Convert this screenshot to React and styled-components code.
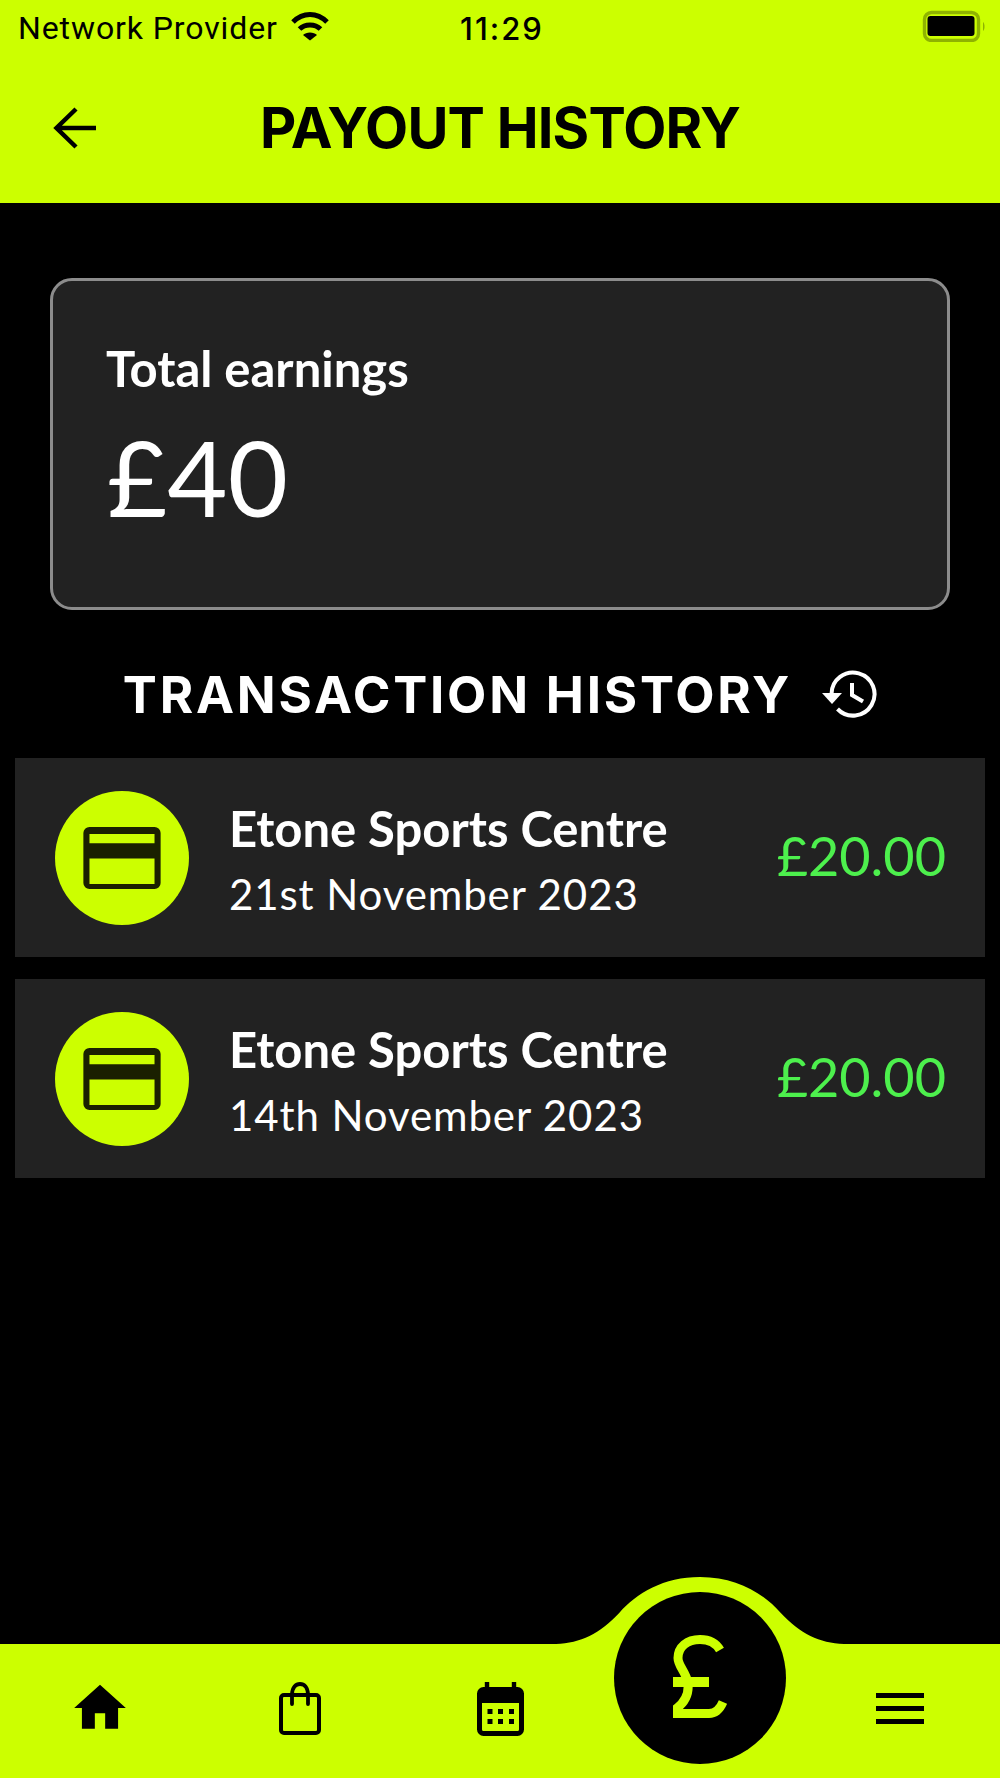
import React from "react";
import styled, { createGlobalStyle } from "styled-components";
import { MdHome } from "react-icons/md";

const LIME = "#ccff00";
const PANEL = "#222222";

const GlobalStyle = createGlobalStyle`
  html, body {
    margin: 0;
    padding: 0;
    background: #000;
  }
  * {
    box-sizing: border-box;
  }
`;

const transactions = [
  { id: 1, place: "Etone Sports Centre", date: "21st November 2023", amount: "£20.00" },
  { id: 2, place: "Etone Sports Centre", date: "14th November 2023", amount: "£20.00" },
];

function WifiIcon() {
  return (
    <svg width="40" height="30" viewBox="0 0 40 30">
      <path d="M3 11 C13 1 27 1 37 11" fill="none" stroke="#000" strokeWidth="5" />
      <path d="M9.5 18 C15 12.5 25 12.5 30.5 18" fill="none" stroke="#000" strokeWidth="5" />
      <path d="M13 24 C16 20.5 24 20.5 27 24 L20 29.5 Z" fill="#000" />
    </svg>
  );
}

function BatteryIcon() {
  return (
    <svg width="64" height="32" viewBox="0 0 64 32">
      <rect x="2.5" y="2.5" width="54" height="28" rx="7" fill="none" stroke="#8fb300" strokeWidth="3.4" />
      <rect x="5.5" y="6" width="47" height="20" rx="3" fill="#000" />
      <path d="M61 12 C63 13 63 20 61 21 Z" fill="#8fb300" />
    </svg>
  );
}

function BackArrow() {
  return (
    <svg width="44" height="42" viewBox="0 0 44 42">
      <path d="M23 2 L3.5 21 L23 40 M4 21 H43" fill="none" stroke="#000" strokeWidth="4.5" />
    </svg>
  );
}

function HistoryIcon() {
  return (
    <svg width="55" height="48" viewBox="0 0 55 48">
      <path d="M9.5 24 A21.5 21.5 0 1 1 15.5 39" fill="none" stroke="#fff" strokeWidth="4" />
      <path d="M0 23 H20 L10 34 Z" fill="#fff" />
      <path d="M30 13 V25 L41 31.5" fill="none" stroke="#fff" strokeWidth="4" />
    </svg>
  );
}

function CardIcon() {
  return (
    <svg width="78" height="62" viewBox="0 0 76 61">
      <path
        fillRule="evenodd"
        d="M6 0 H70 A6 6 0 0 1 76 6 V55 A6 6 0 0 1 70 61 H6 A6 6 0 0 1 0 55 V6 A6 6 0 0 1 6 0 Z M6 7 V16 H70 V7 Z M6 31 V56 H70 V31 Z"
        fill="#1a2000"
      />
    </svg>
  );
}

function BagIcon() {
  return (
    <svg width="42" height="54" viewBox="0 0 42 54">
      <rect x="2" y="13" width="38" height="38" rx="3" fill="none" stroke="#000" strokeWidth="4" />
      <path d="M13 22 V13 C13 5 17 2 21 2 C25 2 29 5 29 13 V22" fill="none" stroke="#000" strokeWidth="3.8" strokeLinecap="round" />
    </svg>
  );
}

function CalendarIcon() {
  const dots = [];
  [27, 37].forEach((y) => {
    [10.5, 21, 32].forEach((x) => {
      dots.push(<rect key={`${x}-${y}`} x={x} y={y} width="5" height="5" fill="#000" />);
    });
  });
  return (
    <svg width="47" height="54" viewBox="0 0 47 54">
      <path d="M10 0 V8 M37 0 V8" stroke="#000" strokeWidth="4.4" />
      <rect x="2.5" y="7.5" width="42" height="44" rx="4" fill="none" stroke="#000" strokeWidth="5" />
      <rect x="2" y="7" width="43" height="14" rx="3" fill="#000" />
      {dots}
    </svg>
  );
}

function PoundIcon() {
  return (
    <svg width="54" height="83" viewBox="0 0 54 83">
      <path
        d="M47 15 C43 8 36 4.5 27 4.5 C14 4.5 5 12 5 23 C5 31 13 37 15 48 C16 58 12 67 4 73 V78.5 H36 C42 78.5 47 74 50 67"
        fill="none"
        stroke={LIME}
        strokeWidth="9"
      />
      <rect x="0" y="42" width="36" height="10" fill={LIME} />
    </svg>
  );
}

export default function App() {
  return (
    <Page>
      <GlobalStyle />
      <TopArea>
        <StatusBar>
          <Carrier>
            Network Provider
            <WifiSlot>
              <WifiIcon />
            </WifiSlot>
          </Carrier>
          <Clock>11:29</Clock>
          <BatterySlot>
            <BatteryIcon />
          </BatterySlot>
        </StatusBar>
        <TitleBar>
          <BackButton>
            <BackArrow />
          </BackButton>
          <PageTitle>PAYOUT HISTORY</PageTitle>
        </TitleBar>
      </TopArea>

      <Main>
        <EarningsCard>
          <EarningsLabel>Total earnings</EarningsLabel>
          <EarningsValue>£40</EarningsValue>
        </EarningsCard>

        <SectionHeading>
          <SectionTitle>TRANSACTION HISTORY</SectionTitle>
          <HistoryIcon />
        </SectionHeading>

        <TransactionList>
          {transactions.map((t) => (
            <TransactionRow key={t.id}>
              <CardBadge>
                <CardIcon />
              </CardBadge>
              <TransactionText>
                <Place>{t.place}</Place>
                <TxDate>{t.date}</TxDate>
              </TransactionText>
              <Amount>{t.amount}</Amount>
            </TransactionRow>
          ))}
        </TransactionList>
      </Main>

      <BottomNav>
        <Bump viewBox="0 0 278 68" preserveAspectRatio="none">
          <path
            d="M0 67 C24 66 42 57 61 36 C78 16 104 0 139 0 C174 0 200 16 217 36 C236 57 254 66 278 67 V68 H0 Z"
            fill={LIME}
          />
        </Bump>
        <NavItem>
          <HomeIcon size={62} color="#000" />
        </NavItem>
        <NavItem>
          <BagIcon />
        </NavItem>
        <NavItem>
          <CalendarIcon />
        </NavItem>
        <NavItem>
          <PayoutButton>
            <PoundIcon />
          </PayoutButton>
        </NavItem>
        <NavItem>
          <Hamburger>
            <span />
            <span />
            <span />
          </Hamburger>
        </NavItem>
      </BottomNav>
    </Page>
  );
}

const Page = styled.div`
  width: 1000px;
  height: 1778px;
  display: flex;
  flex-direction: column;
  background: #000;
  overflow: hidden;
`;

const TopArea = styled.header`
  height: 203px;
  flex-shrink: 0;
  background: ${LIME};
  color: #000;
`;

const StatusBar = styled.div`
  height: 56px;
  padding: 0 14px 0 18px;
  display: grid;
  grid-template-columns: 1fr auto 1fr;
  align-items: center;
`;

const Carrier = styled.div`
  display: flex;
  align-items: center;
  gap: 12px;
  font-family: "Roboto", "Liberation Sans", sans-serif;
  font-size: 32px;
  letter-spacing: 0.9px;
`;

const WifiSlot = styled.span`
  display: flex;
  margin-top: -4px;
`;

const Clock = styled.div`
  font-family: "Inter", "Liberation Sans", sans-serif;
  font-size: 31px;
  font-weight: 500;
  letter-spacing: 2px;
`;

const BatterySlot = styled.div`
  display: flex;
  justify-content: flex-end;
  margin-top: -4px;
`;

const TitleBar = styled.div`
  position: relative;
  height: 147px;
  padding-bottom: 3px;
  display: flex;
  align-items: center;
  justify-content: center;
`;

const BackButton = styled.div`
  position: absolute;
  left: 53px;
  top: 51px;
  display: flex;
`;

const PageTitle = styled.h1`
  margin: 0;
  font-family: "Inter", "Liberation Sans", sans-serif;
  font-size: 56px;
  font-weight: 700;
  letter-spacing: -0.8px;
`;

const Main = styled.main`
  flex: 1;
  min-height: 0;
  padding: 75px 15px 0;
  display: flex;
  flex-direction: column;
`;

const EarningsCard = styled.section`
  margin: 0 35px;
  height: 332px;
  padding: 58px 53px;
  background: ${PANEL};
  border: 3px solid #8c8c8c;
  border-radius: 22px;
  color: #fff;
  font-family: "Lato", "Liberation Sans", sans-serif;
`;

const EarningsLabel = styled.div`
  font-size: 49px;
  font-weight: 700;
  line-height: 58px;
`;

const EarningsValue = styled.div`
  margin-top: 25px;
  padding-left: 1px;
  font-size: 104px;
  font-weight: 400;
  line-height: 110px;
`;

const SectionHeading = styled.div`
  height: 148px;
  padding-top: 20px;
  display: flex;
  align-items: center;
  justify-content: center;
  gap: 30px;
  color: #fff;
`;

const SectionTitle = styled.h2`
  margin: 0;
  font-family: "Inter", "Liberation Sans", sans-serif;
  font-size: 51px;
  font-weight: 700;
  letter-spacing: 2.8px;
`;

const TransactionList = styled.div`
  display: flex;
  flex-direction: column;
  gap: 22px;
`;

const TransactionRow = styled.div`
  height: 199px;
  padding: 0 39px 0 40px;
  display: flex;
  align-items: center;
  background: ${PANEL};
`;

const CardBadge = styled.div`
  width: 134px;
  height: 134px;
  flex-shrink: 0;
  border-radius: 50%;
  background: ${LIME};
  display: flex;
  align-items: center;
  justify-content: center;
`;

const TransactionText = styled.div`
  flex: 1;
  margin-left: 40px;
  padding-top: 6px;
  font-family: "Lato", "Liberation Sans", sans-serif;
  color: #fff;
`;

const Place = styled.div`
  font-size: 49px;
  font-weight: 700;
  line-height: 56px;
`;

const TxDate = styled.div`
  margin-top: 10px;
  font-size: 42px;
  font-weight: 400;
  line-height: 56px;
  letter-spacing: 0.9px;
`;

const Amount = styled.div`
  margin-bottom: 4px;
  font-family: "Lato", "Liberation Sans", sans-serif;
  font-size: 54px;
  color: #4df04d;
`;

const BottomNav = styled.nav`
  position: relative;
  height: 134px;
  flex-shrink: 0;
  background: ${LIME};
  display: grid;
  grid-template-columns: repeat(5, 1fr);
`;

const Bump = styled.svg`
  position: absolute;
  left: 556px;
  top: -67px;
  width: 288px;
  height: 68px;
`;

const NavItem = styled.div`
  position: relative;
  display: flex;
  align-items: flex-start;
  justify-content: center;
  padding-top: 38px;
`;

const HomeIcon = styled(MdHome)`
  margin-top: -5px;
`;

const PayoutButton = styled.div`
  position: absolute;
  left: 14px;
  top: -52px;
  width: 172px;
  height: 172px;
  border-radius: 50%;
  background: #000;
  display: flex;
  align-items: center;
  justify-content: center;
  padding-bottom: 3px;
`;

const Hamburger = styled.div`
  width: 48px;
  margin-top: 11px;
  display: flex;
  flex-direction: column;
  gap: 8px;
  span {
    display: block;
    height: 5px;
    background: #000;
  }
`;
